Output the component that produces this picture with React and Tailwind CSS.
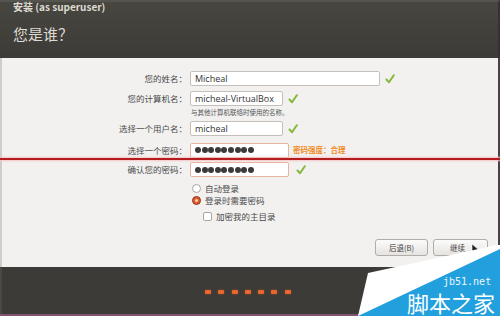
import React from "react";

const cjk = { fontFamily: '"Noto Sans CJK SC", "Noto Sans", sans-serif' };

function Check() {
  return (
    <svg width="10" height="10" viewBox="0 0 10 10" className="shrink-0">
      <path d="M1.5 5.5 L4 8.3 L8.8 1.2" fill="none" stroke="#86b83c" strokeWidth="2" strokeLinecap="round" strokeLinejoin="round" />
    </svg>
  );
}

function Dots({ count = 9 }) {
  return (
    <div className="flex items-center gap-[0.6px]">
      {Array.from({ length: count }).map((_, i) => (
        <span key={i} className="w-[6px] h-[6px] rounded-full bg-[#3a3a3a]" />
      ))}
    </div>
  );
}

function Row({ label, children, className = "" }) {
  return (
    <div className={`flex items-center h-[15px] ${className}`}>
      <div className="w-[188px] text-right text-[8.5px] text-[#4a4a4a] leading-none pr-[1px]" style={cjk}>
        {label}
      </div>
      <div className="ml-[2px] flex items-center gap-[5px]">{children}</div>
    </div>
  );
}

function Field({ width, children, orange = false }) {
  return (
    <div
      className={`h-[15px] ${width} bg-white rounded-[2px] border flex items-center px-[4px] text-[9px] text-[#333] leading-none ${
        orange ? "border-[#e6b4a0]" : "border-[#c4c0b9]"
      }`}
      style={{ fontFamily: '"Open Sans", "Noto Sans", sans-serif' }}
    >
      {children}
    </div>
  );
}

export default function App() {
  return (
    <div className="relative w-[500px] h-[316px] overflow-hidden bg-[#3c3b37]" style={cjk}>
      {/* header */}
      <div className="h-[58px] bg-gradient-to-b from-[#47463f] to-[#3c3b37] border-t-[2px] border-[#55544e] px-[13px] border-r-[2px] border-r-[#3a2c38]">
        <div className="text-[10px] font-bold text-[#dedad2] leading-none">安装 (as superuser)</div>
        <div className="text-[15px] text-[#dedad2] leading-none mt-[14px]">您是谁？</div>
      </div>

      {/* body */}
      <div className="h-[209px] bg-[#f2f1f0] border-l-[2px] border-[#cfcdc9] border-r-[2px] border-r-[#4a4146] flex flex-col">
        <Row label="您的姓名：" className="mt-[13px] -ml-[2px]">
          <Field width="w-[190px]">Micheal</Field>
          <Check />
        </Row>
        <Row label="您的计算机名：" className="mt-[5px] -ml-[2px]">
          <Field width="w-[93px]">micheal-VirtualBox</Field>
          <Check />
        </Row>
        <div className="ml-[189px] mt-[1px] h-[10px] flex items-center text-[6.5px] text-[#555] leading-none">
          与其他计算机联络时使用的名称。
        </div>
        <Row label="选择一个用户名：" className="mt-[4px] -ml-[2px]">
          <Field width="w-[93px]">micheal</Field>
          <Check />
        </Row>
        <Row label="选择一个密码：" className="mt-[6px] -ml-[2px] h-[16px]">
          <Field width="w-[99px]" orange>
            <Dots />
          </Field>
          <span className="text-[7.5px] font-bold text-[#f08a1c] leading-none -ml-[1px]">密码强度：合理</span>
        </Row>
        <div className="h-[2px] bg-[#b31d1d] -ml-[2px] mr-[-2px] shadow-[0_0_2px_1px_#f5c4c4]" />
        <Row label="确认您的密码：" className="mt-[2px] -ml-[2px]">
          <Field width="w-[99px]" orange>
            <Dots />
          </Field>
          <span className="ml-[2px]">
            <Check />
          </span>
        </Row>

        <div className="ml-[190px] mt-[6px] h-[10px] flex items-center gap-[4px]">
          <span className="w-[9px] h-[9px] rounded-full bg-white border border-[#aaa5a0]" />
          <span className="text-[8.5px] text-[#4a4a4a] leading-none">自动登录</span>
        </div>
        <div className="ml-[190px] mt-[2px] h-[10px] flex items-center gap-[4px]">
          <span className="w-[9px] h-[9px] rounded-full bg-[#e2592a] border border-[#8a3a22] flex items-center justify-center">
            <span className="w-[3px] h-[3px] rounded-full bg-[#fbd2b8]" />
          </span>
          <span className="text-[8.5px] text-[#4a4a4a] leading-none">登录时需要密码</span>
        </div>
        <div className="ml-[201px] mt-[6px] h-[10px] flex items-center gap-[4px]">
          <span className="w-[9px] h-[9px] rounded-[2px] bg-white border border-[#aaa5a0]" />
          <span className="text-[8.5px] text-[#4a4a4a] leading-none">加密我的主目录</span>
        </div>

        <div className="mt-[18px] flex justify-end gap-[5px] pr-[10px]">
          <div className="relative w-[53px] h-[17px] rounded-[3px] border border-[#b0aca6] bg-gradient-to-b from-[#fbfbfa] to-[#e6e4e1] flex items-center justify-center text-[7.5px] text-[#444] leading-none">
            后退(B)
          </div>
          <div className="relative w-[55px] h-[17px] rounded-[3px] border border-[#b0aca6] bg-gradient-to-b from-[#fbfbfa] to-[#e6e4e1] flex items-center justify-center text-[7.5px] text-[#444] leading-none">
            <span className="-ml-[6px]">继续</span>
            <svg className="absolute left-[37px] top-[3px]" width="10" height="12" viewBox="0 0 10 12">
              <path d="M1 1 L1 10 L3.4 7.8 L5.2 11.3 L6.6 10.6 L4.9 7.2 L8.2 7.2 Z" fill="#222" stroke="#fff" strokeWidth="0.6" />
            </svg>
          </div>
        </div>
      </div>

      {/* footer */}
      <div className="h-[47px] bg-[#3c3b37] border-l-[2px] border-[#4a4944] flex items-center pl-[203px]">
        <div className="flex gap-[7.3px] mt-[2px]">
          {Array.from({ length: 7 }).map((_, i) => (
            <span key={i} className="w-[6px] h-[4px] rounded-[1px] bg-[#e8672d] shadow-[0_0_2px_#b9502a]" />
          ))}
        </div>
      </div>
      <div className="h-[2px] bg-[#7e5370]" />

      {/* watermark */}
      <svg className="absolute left-0 top-0" width="500" height="316" viewBox="0 0 500 316">
        <polygon points="368,273 497,245 500,245 500,316 358,316" fill="#ffffff" />
        <polygon points="358,316 500,249 500,316" fill="#22a0de" />
      </svg>
      <div
        className="absolute left-[443px] top-[277px] text-[10px] leading-[10px] text-[#eaf6ff]"
        style={{ fontFamily: '"DejaVu Sans Mono", monospace' }}
      >
        jb51.net
      </div>
      <div className="absolute left-[407px] top-[291px] text-[22px] leading-[22px] text-white">
        脚本之家
      </div>
    </div>
  );
}
